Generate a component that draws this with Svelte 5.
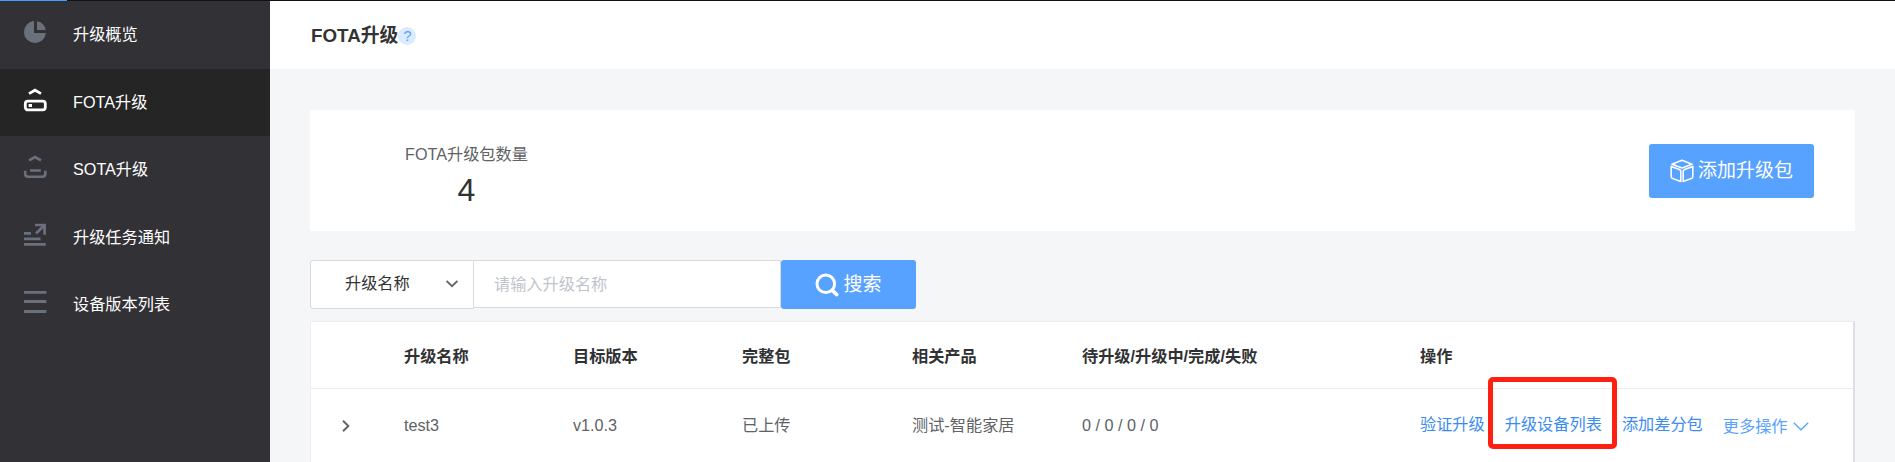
<script>
  const menu = [
    { id: 'overview', label: '升级概览' },
    { id: 'fota', label: 'FOTA升级' },
    { id: 'sota', label: 'SOTA升级' },
    { id: 'notice', label: '升级任务通知' },
    { id: 'versions', label: '设备版本列表' }
  ];
  let active = $state('fota');
  let keyword = $state('');
  const columns = ['', '升级名称', '目标版本', '完整包', '相关产品', '待升级/升级中/完成/失败', '操作'];
</script>

<div class="page">
  <div class="topline"><i></i></div>
  <div class="body">
    <nav>
      {#each menu as item}
        <div class="item {item.id}" class:active={active === item.id}>
          <svg width="24" height="24" viewBox="0 0 24 24" fill="none" stroke="currentColor">
            {#if item.id === 'overview'}
              <path fill="currentColor" stroke="none" d="M11 1.1V12.9H22.9A11 11 0 1 1 11 1.1ZM14 1.2A11 11 0 0 1 22.8 10H14Z" />
            {:else if item.id === 'fota'}
              <path stroke-width="2.8" d="M6 5.6L12 2.2L18 5.6" />
              <rect x="2.3" y="13.2" width="20" height="8.7" rx="2.6" stroke-width="2.8" />
              <rect x="5.6" y="16" width="3.4" height="3" fill="currentColor" stroke="none" />
            {:else if item.id === 'sota'}
              <path stroke-width="2.6" d="M6 5.4L12 2.1L18 5.4M7 15.5H17.8M2.2 15.8V18.8Q2.2 21.8 5.2 21.8H19.3Q22.3 21.8 22.3 18.8V15.8" />
            {:else if item.id === 'notice'}
              <path stroke-width="2.7" d="M12 3H21.6V12.8M21.4 3.3L13 11.5M1 11.3H8M1 16.8H17.5M1 22.3H22.8" />
            {:else}
              <path stroke-width="2.8" d="M1 2.3H23.4M1 11.5H23.4M1 21.5H23.4" />
            {/if}
          </svg>
          <span>{item.label}</span>
        </div>
      {/each}
    </nav>
    <main>
      <header><h1>FOTA升级</h1><span class="help">?</span></header>
      <div class="content">
        <section class="summary">
          <div class="stat"><p>FOTA升级包数量</p><b>4</b></div>
          <button class="add">
            <svg width="24" height="24" viewBox="0 0 24 24" fill="none" stroke="currentColor" stroke-width="1.6" stroke-linejoin="round">
              <path d="M2 5.2L12 1.2L22 5.2L12 9Z" />
              <path d="M1.2 7.4L9.4 10.4Q10.8 11 10.8 12.4V22.4L2.6 19.4Q1.2 18.9 1.2 17.4ZM22.8 7.4L14.6 10.4Q13.2 11 13.2 12.4V22.4L21.4 19.4Q22.8 18.9 22.8 17.4Z" />
            </svg>
            <span>添加升级包</span>
          </button>
        </section>
        <div class="search">
          <div class="select">
            <span>升级名称</span>
            <svg width="12" height="8" viewBox="0 0 12 8" fill="none" stroke="#66686c" stroke-width="1.9"><path d="M.6 1L6 6.2L11.4 1" /></svg>
          </div>
          <input placeholder="请输入升级名称" bind:value={keyword} />
          <button class="go">
            <svg width="24" height="24" viewBox="0 0 24 24" fill="none" stroke="currentColor" stroke-width="3"><circle cx="10.8" cy="10.8" r="8.8" /><path stroke-width="3.8" stroke-linecap="round" d="M17.3 17.3L21.6 21.5" /></svg>
            <span>搜索</span>
          </button>
        </div>
        <section class="table">
          <div class="row head">
            {#each columns as c}<div>{c}</div>{/each}
          </div>
          <div class="row">
            <div class="expand"><svg width="8" height="12" viewBox="0 0 8 12" fill="none" stroke="#606266" stroke-width="1.9"><path d="M1 .7L6.4 6L1 11.3" /></svg></div>
            <div>test3</div>
            <div>v1.0.3</div>
            <div>已上传</div>
            <div>测试-智能家居</div>
            <div>0 / 0 / 0 / 0</div>
            <div class="ops">
              <a>验证升级</a>
              <a class="marked">升级设备列表</a>
              <a>添加差分包</a>
              <a class="more">更多操作<svg width="16" height="9" viewBox="0 0 16 9" fill="none" stroke="currentColor" stroke-width="1.2"><path d="M.8 .8L8 7.8L15.2 .8" /></svg></a>
            </div>
          </div>
        </section>
      </div>
    </main>
  </div>
</div>

<style>
  :global(body) { margin: 0; overflow: hidden; }
  .page {
    box-sizing: border-box; height: 462px; overflow: hidden; display: flex; flex-direction: column;
    font: 16.2px/24px "Liberation Sans", "Noto Sans CJK SC", sans-serif; color: #606266; background: #f4f6f8;
  }
  .page *, .page *::after { box-sizing: border-box; }
  .topline { height: 1px; flex: none; background: #111; }
  .topline i { display: block; width: 67px; height: 1px; background: #409eff; }
  .body { flex: 1; display: flex; min-height: 0; }
  nav { width: 270px; flex: none; background: #323136; color: #fff; }
  .item { height: 67.4px; padding: 0 0 0 23px; display: flex; align-items: center; }
  .item:first-child { height: 68px; }
  .item svg { color: #6b707d; margin: -6px 26px 0 0; }
  .item.active { background: #252525; }
  .item.active svg { color: #fff; }
  .item span { line-height: 24px; margin-top: -1.6px; }
  main { flex: 1; min-width: 0; display: flex; flex-direction: column; }
  header { height: 68px; flex: none; background: #fff; padding-left: 41px; display: flex; align-items: center; }
  h1 { margin: 0; font-size: 18.8px; line-height: 26px; color: #333; font-weight: 700; padding-top: 2px; }
  .help { width: 18px; height: 18px; border-radius: 50%; background: #dcebff; color: #57a3ff; font-size: 15px; line-height: 18px; text-align: center; margin-top: 2px; }
  .content { flex: 1; min-height: 0; padding: 41px 40px 0; display: flex; flex-direction: column; }
  .summary { height: 121px; flex: none; background: #fff; padding: 0 41px 0 95px; display: flex; justify-content: space-between; align-items: center; }
  .stat { text-align: center; padding-top: 8px; }
  .stat p { margin: 0; line-height: 24px; }
  .stat b { display: block; font-size: 32px; line-height: 36px; margin-top: 6px; font-weight: 400; color: #303133; }
  button { border: 0; padding: 0; border-radius: 3px; background: #57a1ff; color: #fff; font: inherit; font-size: 19px; display: flex; align-items: center; justify-content: center; gap: 4px; }
  .add { width: 165px; height: 54px; }
  .search { height: 49px; flex: none; margin-top: 29px; display: flex; align-items: flex-start; }
  .select { width: 164px; height: 49px; border: 1px solid #d8dadd; border-radius: 3px 0 0 3px; background: #fff; color: #333; padding: 0 15px 2px 34px; display: flex; align-items: center; justify-content: space-between; }
  .select span { margin-top: -2px; }
  input { width: 307px; height: 48px; border: 1px solid #d8dadd; border-left: 0; background: #fff; padding: 0 21px 0 20px; font: inherit; color: #606266; outline: 0; }
  input::placeholder { color: #c0c4cc; opacity: 1; }
  .go { width: 135px; height: 49px; }
  .table { flex: 1; min-height: 0; margin-top: 12px; background: #fff; border: solid #ebedee; border-width: 1px 2px 0 1px; border-right-color: #dcdfe6; }
  .row { display: grid; grid-template-columns: 93px 169px 169px 170px 170px 338px 1fr; height: 74px; padding-bottom: 2px; align-items: center; }
  .head { height: 67px; padding: 1px 0 0; border-bottom: 1px solid #ebeced; color: #303133; font-weight: 700; }
  .expand { display: flex; padding: 2px 0 0 31px; }
  .ops { display: flex; white-space: nowrap; color: #3a8cf2; }
  .ops a:nth-child(3) { margin-left: 20px; }
  .marked { position: relative; margin-left: 20px; }
  .marked::after { content: ''; position: absolute; left: -17px; top: -35px; width: 129px; height: 72px; border: 5px solid #ff2012; border-radius: 5px; }
  .more { margin-left: 20px; color: #57a1ff; padding-top: 2px; display: flex; align-items: center; gap: 5px; }
</style>
